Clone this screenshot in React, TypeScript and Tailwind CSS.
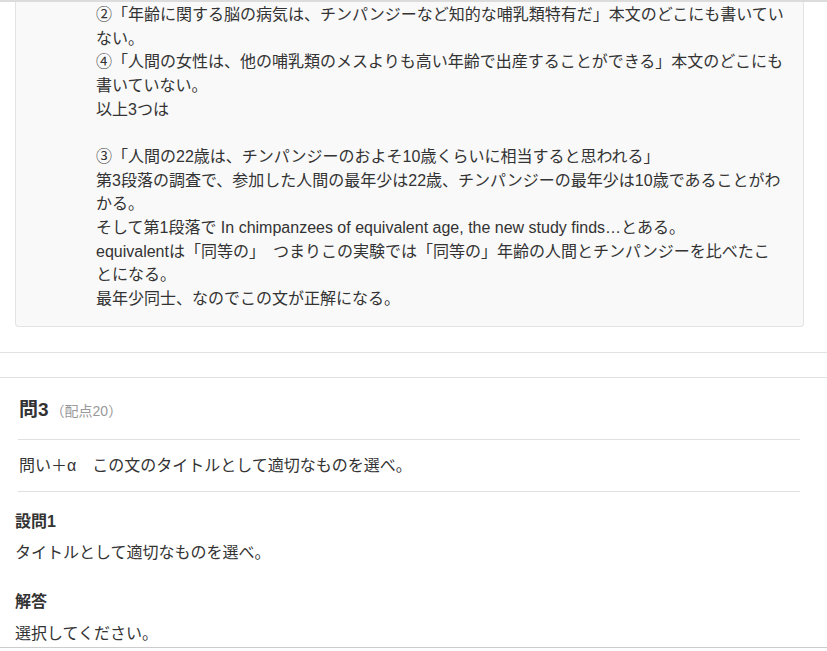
const font = { fontFamily: '"Liberation Sans", "Noto Sans CJK JP", sans-serif' };

const explanation = [
  "②「年齢に関する脳の病気は、チンパンジーなど知的な哺乳類特有だ」本文のどこにも書いてい",
  "ない。",
  "④「人間の女性は、他の哺乳類のメスよりも高い年齢で出産することができる」本文のどこにも",
  "書いていない。",
  "以上3つは",
  "",
  "③「人間の22歳は、チンパンジーのおよそ10歳くらいに相当すると思われる」",
  "第3段落の調査で、参加した人間の最年少は22歳、チンパンジーの最年少は10歳であることがわ",
  "かる。",
  "そして第1段落で In chimpanzees of equivalent age, the new study finds…とある。",
  "equivalentは「同等の」　つまりこの実験では「同等の」年齢の人間とチンパンジーを比べたこ",
  "とになる。",
  "最年少同士、なのでこの文が正解になる。",
];

export default function App() {
  return (
    <div className="h-[651px] w-[827px] overflow-hidden bg-white text-[#333]" style={font}>
      {/* previous question, scrolled */}
      <div className="border-t-2 border-b border-t-[#dcdcdc] border-b-[#e2e2e2] pb-[25px]">
        <div className="ml-[15px] w-[789px] rounded-b-[4px] border-x border-b border-[#e3e3e3] bg-[#f9f9f9] pb-[15px] pl-[80px] pt-[1px]">
          {explanation.map((line, i) => (
            <div key={i} className="h-[23.67px] whitespace-nowrap text-[16px] leading-[23.67px]">
              {line}
            </div>
          ))}
        </div>
      </div>

      {/* question 3 */}
      <div className="mt-[24px] border-t border-[#e2e2e2]">
        <div className="ml-[18px] w-[782px]">
          <div className="border-b border-[#e0e0e0] pb-[16px] pl-[1px] pt-[20px] leading-[24px]">
            <span className="text-[19px] font-bold">問3</span>
            <span className="ml-[2px] text-[14px] text-[#999]">（配点20）</span>
          </div>
          <div className="border-b border-[#e0e0e0] pb-[13px] pl-[1px] pt-[14px] text-[16px] leading-[24px]">
            問い＋α　この文のタイトルとして適切なものを選べ。
          </div>
        </div>

        <div className="pl-[15px] pt-[18px] text-[16px] leading-[24px]">
          <div className="font-bold">設問1</div>
          <div className="mt-[7px]">タイトルとして適切なものを選べ。</div>
          <div className="mt-[25px] font-bold">解答</div>
          <div className="mt-[8px]">選択してください。</div>
        </div>
        <div className="mt-[1px] border-b border-[#cccccc]" />
      </div>
    </div>
  );
}
